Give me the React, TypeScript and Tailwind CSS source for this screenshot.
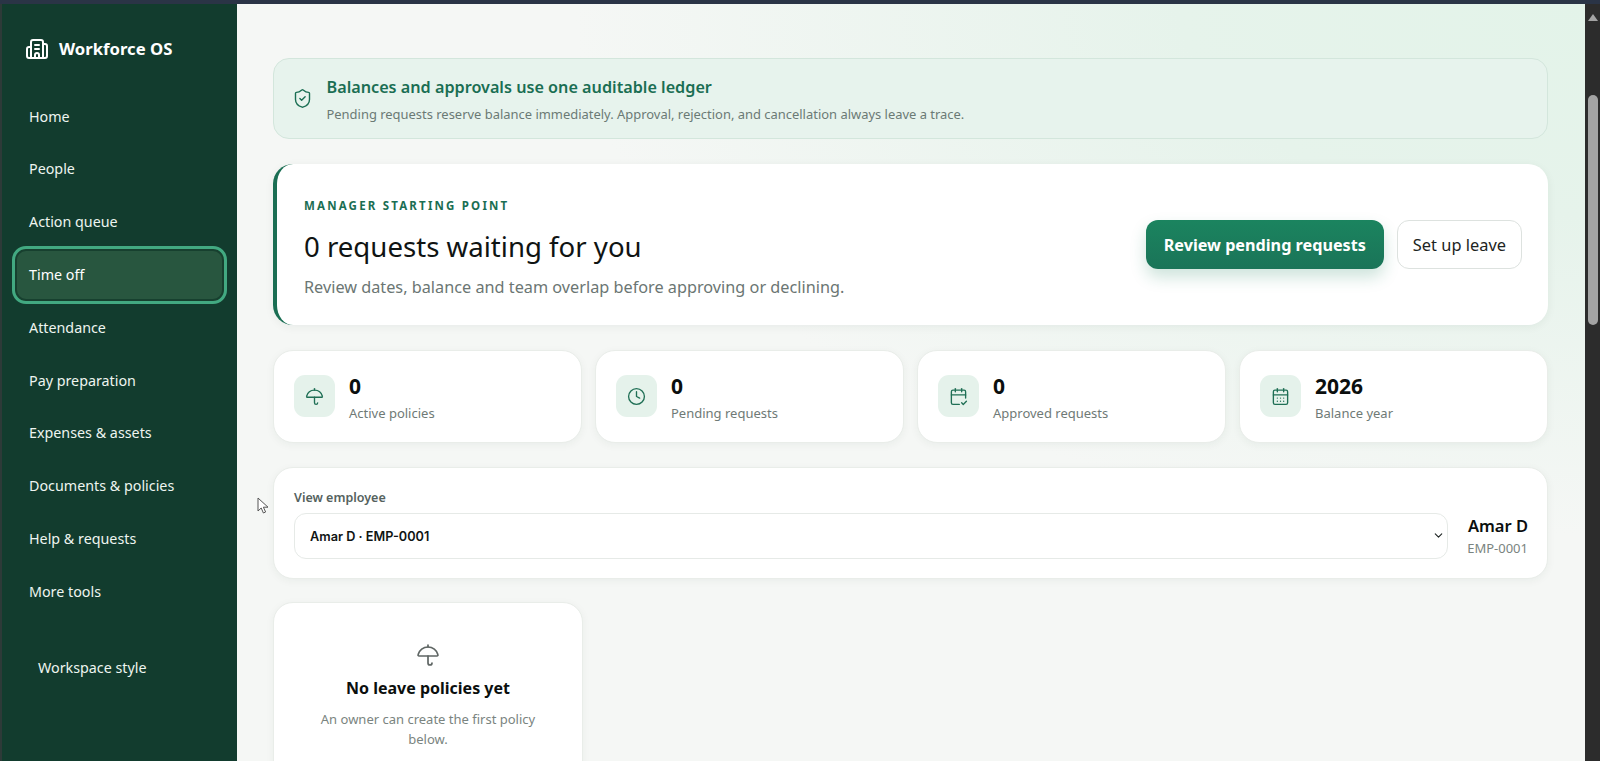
import { Building2, ChevronDown, ShieldCheck, Umbrella, Clock, CalendarCheck2, CalendarDays, type LucideIcon } from 'lucide-react';

const navItems = [
  'Home',
  'People',
  'Action queue',
  'Time off',
  'Attendance',
  'Pay preparation',
  'Expenses & assets',
  'Documents & policies',
  'Help & requests',
  'More tools',
];

const stats: { icon: LucideIcon; value: string; label: string }[] = [
  { icon: Umbrella, value: '0', label: 'Active policies' },
  { icon: Clock, value: '0', label: 'Pending requests' },
  { icon: CalendarCheck2, value: '0', label: 'Approved requests' },
  { icon: CalendarDays, value: '2026', label: 'Balance year' },
];

const Sidebar = () => (
  <aside className="w-[236.5px] shrink-0 border-l-2 border-[#2d3a38] bg-[#123c2e] text-[#eef5f0] flex flex-col">
    <div className="flex items-start gap-[10px] pl-[23px] pt-[33px] h-[84px]">
      <Building2 size={24} strokeWidth={2} className="text-white" />
      <span className="text-[16.7px] leading-[24px] font-bold text-white">Workforce OS</span>
    </div>
    <nav className="flex flex-col px-[10px] pt-[2px]">
      {navItems.map(item => (
        <a
          key={item}
          className={`flex items-center text-[14.3px] rounded-[14px] ${
            item === 'Time off'
              ? 'bg-[#28563f] border-[3px] border-[#42a981] pl-[14px] shadow-[inset_0_0_0_2px_rgba(12,50,36,0.6)] text-white h-[58px] -my-[2.6px] relative'
              : 'h-[52.8px] pl-[17px]'
          }`}
        >
          {item}
        </a>
      ))}
    </nav>
    <div className="pl-[36px] pt-[39.5px] text-[14.3px]">Workspace style</div>
  </aside>
);

const StatCard = ({ icon: Icon, value, label }: { icon: LucideIcon; value: string; label: string }) => (
  <div className="h-[93px] bg-white rounded-[20px] border border-[#e9ede9] shadow-[0_2px_8px_rgba(20,50,40,0.05)] flex items-center pl-[20px] gap-[14px]">
    <div className="w-[41px] h-[42px] rounded-[11px] bg-[#e5f2eb] flex items-center justify-center text-[#1f6f55]">
      <Icon size={19} strokeWidth={1.7} />
    </div>
    <div className="pt-[3px]">
      <div className="text-[21px] leading-[28px] font-bold text-[#0b0f0e]">{value}</div>
      <div className="text-[13px] leading-[20px] mt-[3px] text-[#6f7a76]">{label}</div>
    </div>
  </div>
);

export default function App() {
  return (
    <div className="h-screen overflow-hidden flex flex-col bg-[#2a3446] font-['Noto_Sans','Open_Sans',sans-serif]">
      <div className="h-[4px] shrink-0" />
      <div className="flex-1 min-h-0 flex">
        <Sidebar />
        <main className="flex-1 min-w-0 overflow-hidden pl-[36.5px] pr-[37px] pt-[54px] bg-[radial-gradient(ellipse_75%_70%_at_100%_0%,#e3f3e9_0%,#e6f3eb_40%,#f5f7f5_100%)] bg-[#f5f7f5]">
          <div className="h-[81px] rounded-[16px] border border-[#d3e6dc] bg-[#e7f3ed] flex items-center pl-[18px] gap-[13.5px]">
            <ShieldCheck size={21} strokeWidth={1.6} className="text-[#1a6e53]" />
            <div className="pt-[2px]">
              <div className="text-[16.2px] leading-[22px] font-semibold text-[#1a6e53]">Balances and approvals use one auditable ledger</div>
              <div className="text-[12.95px] leading-[20px] mt-[6px] text-[#6b7a75]">Pending requests reserve balance immediately. Approval, rejection, and cancellation always leave a trace.</div>
            </div>
          </div>

          <div className="mt-[25px] h-[160.5px] rounded-[20px] bg-white border-l-[4px] border-[#1a6e53] shadow-[0_2px_10px_rgba(20,50,40,0.06)] flex items-center justify-between pl-[27px] pr-[26px]">
            <div className="pt-[7px]">
              <div className="text-[11.5px] leading-[16px] font-bold tracking-[0.19em] text-[#1a6e53]">MANAGER STARTING POINT</div>
              <div className="text-[27.6px] leading-[38px] mt-[13px] text-[#101413]">0 requests waiting for you</div>
              <div className="text-[16.25px] leading-[22px] mt-[11px] text-[#6b7673]">Review dates, balance and team overlap before approving or declining.</div>
            </div>
            <div className="flex items-center gap-[13px]">
              <button className="h-[49px] px-[18px] pt-[1px] rounded-[12px] bg-linear-to-b from-[#1b845f] to-[#1a7458] text-white text-[16.2px] font-bold shadow-[0_8px_16px_rgba(26,127,92,0.22)]">Review pending requests</button>
              <button className="h-[49px] px-[15px] pt-[2px] rounded-[12px] bg-white border border-[#dde2df] text-[#1d2422] text-[16.4px]">Set up leave</button>
            </div>
          </div>

          <div className="mt-[25px] grid grid-cols-4 gap-[13px]">
            {stats.map(s => (
              <StatCard key={s.label} {...s} />
            ))}
          </div>

          <div className="mt-[24.5px] h-[112px] rounded-[20px] bg-white border border-[#e9ede9] shadow-[0_2px_8px_rgba(20,50,40,0.05)] pl-[20px] pr-[19px] pt-[18px] flex items-end gap-[19px] pb-[19px]">
            <div className="flex-1">
              <label className="block text-[12.5px] leading-[18px] font-semibold text-[#55625e] mb-[6px]">View employee</label>
              <div className="relative">
                <select className="appearance-none w-full h-[46px] pt-[1px] rounded-[12px] border border-[#e6eae7] bg-white pl-[15px] pr-[24px] text-[12.7px] font-semibold text-[#101413] font-['Inter',sans-serif]">
                  <option>Amar D · EMP-0001</option>
                </select>
                <ChevronDown size={13} strokeWidth={2} className="absolute right-[3px] top-[16px] text-[#1d2422]" />
              </div>
            </div>
            <div className="text-right pb-[2px]">
              <div className="text-[16.5px] leading-[22px] font-semibold text-[#0b0f0e]">Amar D</div>
              <div className="text-[13px] leading-[18px] mt-[2px] text-[#7a8480]">EMP-0001</div>
            </div>
          </div>

          <div className="mt-[23px] w-[310px] h-[300px] rounded-[20px] bg-white border border-[#e9ede9] shadow-[0_2px_8px_rgba(20,50,40,0.05)] flex flex-col items-center pt-[40px] px-[40px] text-center">
            <Umbrella size={24} strokeWidth={1.7} className="text-[#5f6664]" />
            <div className="text-[16px] leading-[24px] mt-[9px] font-bold text-[#0b0f0e]">No leave policies yet</div>
            <div className="text-[13px] leading-[20px] mt-[9px] text-[#7a8480]">An owner can create the first policy below.</div>
          </div>
        </main>
        <div className="w-[15px] shrink-0 bg-[#2c2c2c] flex flex-col items-center pt-[10px]">
          <div className="w-0 h-0 border-l-[5px] border-r-[5px] border-b-[7px] border-l-transparent border-r-transparent border-b-[#a3a3a3]" />
          <div className="w-[10px] h-[230px] mt-[74px] rounded-full bg-[#a3a3a3]" />
        </div>
      </div>
      <svg className="absolute left-[257px] top-[497px]" width="13" height="18" viewBox="0 0 13 18" fill="none">
        <path d="M1 1v13l3.2-3 2.2 5 2.2-1-2.2-4.8H11z" fill="#fff" stroke="#555" strokeWidth="1" strokeLinejoin="round" />
      </svg>
    </div>
  );
}
